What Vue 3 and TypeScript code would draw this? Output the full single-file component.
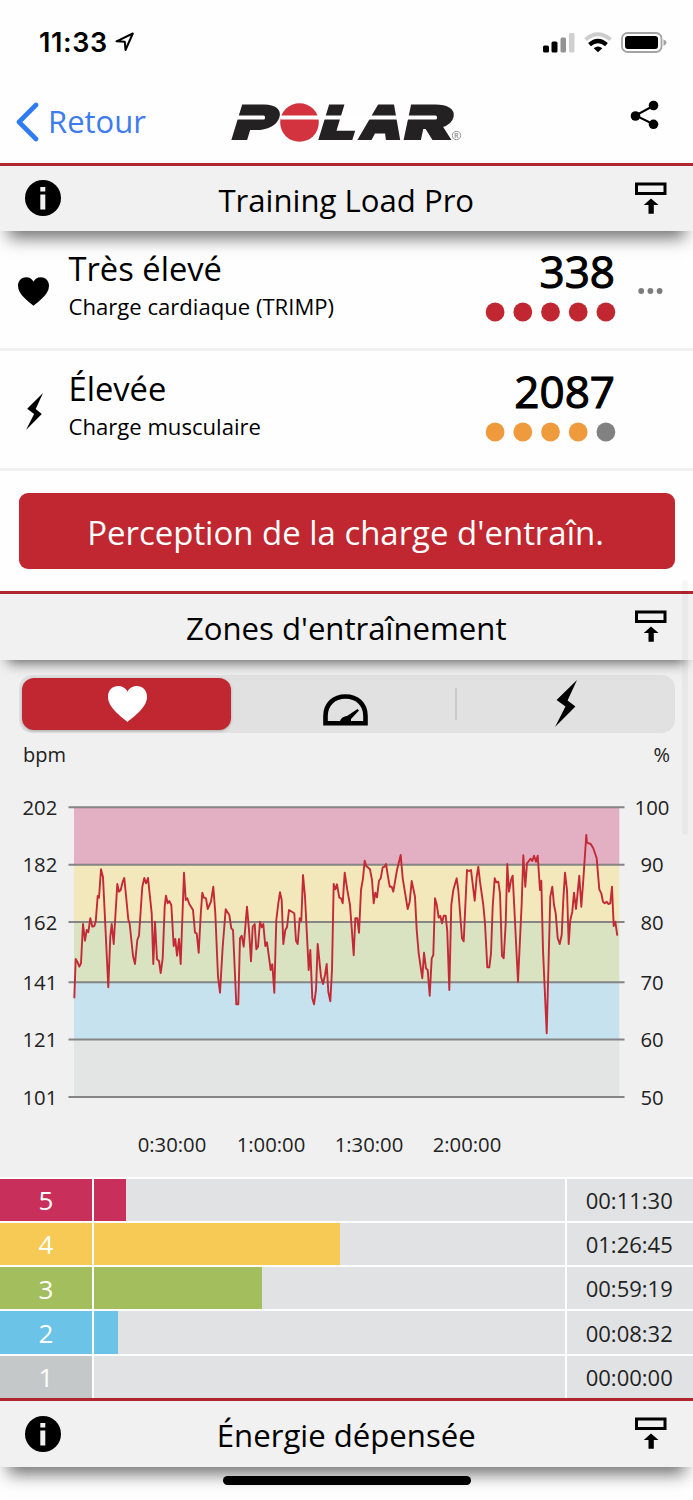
<script setup lang="ts">
interface LoadRow {
  icon: 'heart' | 'bolt'
  level: string
  label: string
  value: string
  dots: string[]
  more: boolean
}

interface Zone {
  id: number
  color: string
  width: number
  time: string
}

const RED = '#c02730'
const ORANGE = '#f09a3e'
const GREY = '#818181'

const HEART = 'M20 37 C15 32 0 23 0 11 C0 4 5 0 10.500 0 C15 0 18.500 2.500 20 6 C21.500 2.500 25 0 29.500 0 C35 0 40 4 40 11 C40 23 25 32 20 37 Z'
const BOLT = 'M21 0 L1.500 19.500 L10 26 L0 46 L19.500 26 L12 20 Z'

const loads: LoadRow[] = [
  { icon: 'heart', level: 'Très élevé', label: 'Charge cardiaque (TRIMP)', value: '338', dots: [RED, RED, RED, RED, RED], more: true },
  { icon: 'bolt', level: 'Élevée', label: 'Charge musculaire', value: '2087', dots: [ORANGE, ORANGE, ORANGE, ORANGE, GREY], more: false },
]

const zones: Zone[] = [
  { id: 5, color: '#c92f5b', width: 32.5, time: '00:11:30' },
  { id: 4, color: '#f6ca55', width: 246.5, time: '01:26:45' },
  { id: 3, color: '#a3be5c', width: 168, time: '00:59:19' },
  { id: 2, color: '#6bc3e8', width: 24.5, time: '00:08:32' },
  { id: 1, color: '#c5c8c9', width: 0, time: '00:00:00' },
]

const levels = [
  { y: 27.3, bpm: '202', pct: '100' },
  { y: 84.7, bpm: '182', pct: '90' },
  { y: 142, bpm: '162', pct: '80' },
  { y: 202.3, bpm: '141', pct: '70' },
  { y: 259.5, bpm: '121', pct: '60' },
  { y: 317, bpm: '101', pct: '50' },
]
const bandColors = ['#e2afc3', '#f3e7bc', '#d9e2c1', '#c5e2ee', '#e3e4e4']
const bands = bandColors.map((fill, i) => ({ fill, y: levels[i].y, h: levels[i + 1].y - levels[i].y }))

const ticks = [
  { x: 172, label: '0:30:00' },
  { x: 271, label: '1:00:00' },
  { x: 369, label: '1:30:00' },
  { x: 467, label: '2:00:00' },
]

// Heart-rate samples, three trace units per chart unit.
const part1 = '43,625 47,507 52,515 58,530 63,520 69,402 75,452 80,420 85,427 91,385 97,410 103,408 107,395 113,318 117,323 123,238 129,262 145,592 151,440 155,402 161,462 172,282 177,305 182,300 188,275 193,264 205,388 209,402 219,498 225,522 232,450 237,437 247,290 253,264 258,280 264,264 275,370 280,522 285,395 291,508 297,513 302,549 308,505 314,350 318,317 323,340 328,333 334,345 341,468 346,447 351,497 357,447 362,522 372,248 377,330 382,325 388,342 399,360 405,428 410,430 416,488 422,375 427,308 432,323 438,325 443,357 453,335 460,290 466,370 474,560 480,608 488,470 497,358 508,375 514,415 519,420 529,643 535,643 540,445 545,437 551,470 561,350 567,420 573,514 578,410 584,402'
const part2 = '49,478 54,470 60,395 65,412 70,402 76,468 81,457 92,540 97,523 103,608 109,390 115,340 120,307 125,330 130,462 136,420 141,412 147,360 163,370 168,452 173,462 179,385 184,392 189,255 195,320 206,540 211,480 217,625 222,643 228,600 233,462 243,560 249,582 255,555 260,522 265,605 271,634 276,540 281,282 286,298 291,283 298,323 303,325 308,340 314,248 322,300 330,345 341,496 346,385 352,385 357,428 363,300 369,265 374,212 379,228 390,238 396,270 401,340 406,308 411,322 417,272 422,265 428,232 434,230 438,222 444,260 449,290 455,290 460,305 471,240 477,215 482,195 488,265 503,357 509,335 515,273 525,320 530,420 536,490 547,565 552,488 558,535 563,540'
const part3 = '-1,617 5,505 10,495 15,325 20,343 26,383 31,378 36,400 41,377 47,377 52,425 58,600 64,345 70,300 80,265 85,300 96,445 101,454 111,240 117,243 123,240 134,332 140,260 145,230 150,275 160,345 165,400 172,532 178,532 183,490 188,350 194,265 199,277 205,275 210,310 216,498 221,505 227,400 232,222 237,305 243,270 248,257 264,575 275,340 280,196 286,290 291,220 302,206 307,213 312,197 318,215 323,197 330,300 334,272 339,480 350,730 361,320 367,290 372,345 377,370 383,445 389,462 395,435 400,330 405,248 411,300 416,462 421,390 427,365 432,308 438,357 448,257 454,350 460,270 469,135 471,158 482,162 490,175 500,205 508,298 514,310 519,335 524,340 530,335 535,342 541,340 546,290 551,408 556,395 562,437'

function toPoints(part: string, offset: number): string {
  return part
    .split(' ')
    .map((pair) => {
      const [x, y] = pair.split(',').map(Number)
      return `${(60 + (x + offset) / 3).toFixed(1)},${(10 + y / 3).toFixed(1)}`
    })
    .join(' ')
}
const trace = [toPoints(part1, 0), toPoints(part2, 540), toPoints(part3, 1110)].join(' ')
</script>

<template>
  <main class="screen">
    <header class="status">
      <div class="clock">
        <span>11:33</span>
        <svg width="20" height="20" viewBox="0 0 20 20">
          <path d="M1.500 9.300 L17.800 1.500 L10.500 18 L9.800 9.800 Z" fill="none" stroke="#000" stroke-width="2" stroke-linejoin="round" />
        </svg>
      </div>
      <svg class="signals" width="126" height="24" viewBox="0 0 126 24">
        <rect x="1" y="13.500" width="6" height="7" rx="1.500" />
        <rect x="9.500" y="9.500" width="6" height="11" rx="1.500" />
        <rect x="18.500" y="5.500" width="5.500" height="15" rx="1.500" fill="#939393" />
        <rect x="27" y="1" width="5.500" height="19.500" rx="1.500" fill="#cfcfcf" />
        <path d="M43.500 7.500 Q56 -3 68.500 7.500" fill="none" stroke="#cdcdcd" stroke-width="3.800" />
        <path d="M47.500 12.600 Q56 5.300 64.500 12.600" fill="none" stroke="#000" stroke-width="4.200" />
        <path d="M51.700 16.300 Q56 12.800 60.300 16.300 L56 20.300 Z" />
        <rect x="80" y="1" width="39.500" height="19" rx="5.500" fill="none" stroke="#a3a3a3" stroke-width="1.800" />
        <rect x="83" y="4" width="33" height="13" rx="3" />
        <path d="M121.500 7.500 Q124.500 8.500 124.500 10.500 Q124.500 12.800 121.500 13.800 Z" fill="#a3a3a3" />
      </svg>
    </header>

    <nav class="nav">
      <a class="back">
        <svg width="26" height="40" viewBox="0 0 26 40">
          <path d="M21 3 L4 20 L21 37" fill="none" stroke="#2f7bf6" stroke-width="4.600" stroke-linecap="round" stroke-linejoin="round" />
        </svg>
        <span>Retour</span>
      </a>
      <svg class="logo" width="260" height="82" viewBox="-12 -20 260 82">
        <g class="wordmark">
          <text transform="translate(-1 37) skewX(-17)" textLength="43" lengthAdjust="spacingAndGlyphs">P</text>
          <text transform="translate(86 37) skewX(-17)" textLength="36" lengthAdjust="spacingAndGlyphs">L</text>
          <text transform="translate(127 37) skewX(-12)" textLength="42" lengthAdjust="spacingAndGlyphs">A</text>
          <text transform="translate(171 37) skewX(-12)" textLength="48" lengthAdjust="spacingAndGlyphs">R</text>
        </g>
        <rect x="16" y="8" width="19" height="14" fill="#242122" />
        <rect x="147" y="12" width="12" height="15" fill="#242122" />
        <rect x="190" y="8" width="18" height="14" fill="#242122" />
        <circle cx="68.500" cy="20.500" r="19.300" fill="#d3333f" />
        <rect x="-2" y="13.400" width="36" height="4" rx="1.500" fill="#fff" />
        <rect x="49" y="13.400" width="157" height="4" rx="1.500" fill="#fff" />
        <circle cx="225.500" cy="33.500" r="4.200" fill="none" stroke="#999" stroke-width="1" />
        <text class="mark" x="225.500" y="36" text-anchor="middle">R</text>
      </svg>
      <svg class="share" width="32" height="32" viewBox="0 0 32 32">
        <path d="M25 6.500 L6.500 16.500 L25 25.500" fill="none" stroke="#000" stroke-width="2" />
        <circle cx="24.500" cy="6.500" r="4.800" />
        <circle cx="6.500" cy="17" r="4.800" />
        <circle cx="24.500" cy="25.300" r="4.800" />
      </svg>
    </nav>

    <section class="bar top-bar">
      <svg class="info" width="36" height="36" viewBox="0 0 36 36">
        <circle cx="18" cy="18" r="18" />
        <rect x="15.300" y="7" width="5" height="4.500" fill="#f1f1f1" />
        <rect x="15.300" y="14.500" width="5" height="15" fill="#f1f1f1" />
      </svg>
      <h2>Training Load Pro</h2>
      <svg class="collapse" width="32" height="33" viewBox="0 0 32 33">
        <rect x="1.500" y="2" width="28.500" height="9.500" fill="none" stroke="#000" stroke-width="3" />
        <path d="M16 16.500 L23.500 23 L18.800 23 L18.800 31.700 L13.500 31.700 L13.500 23 L8.800 23 Z" />
      </svg>
    </section>

    <section class="loads">
      <article v-for="row in loads" :key="row.value" class="load">
        <svg v-if="row.icon === 'heart'" class="load-icon" width="31" height="29" viewBox="0 0 40 37">
          <path :d="HEART" />
        </svg>
        <svg v-else class="load-icon bolt" width="17" height="37" viewBox="0 0 21 46" preserveAspectRatio="none">
          <path :d="BOLT" />
        </svg>
        <div class="load-text">
          <strong>{{ row.level }}</strong>
          <span>{{ row.label }}</span>
        </div>
        <div class="load-score">
          <b>{{ row.value }}</b>
          <svg width="130" height="20" viewBox="0 0 130 20">
            <circle v-for="(color, i) in row.dots" :key="i" :cx="10.1 + i * 27.7" cy="10" r="9.400" :fill="color" />
          </svg>
        </div>
        <svg class="more" width="25" height="6" viewBox="0 0 25 6">
          <template v-if="row.more">
            <circle v-for="i in 3" :key="i" :cx="3.2 + (i - 1) * 9.2" cy="3" r="2.900" fill="#7c7c7c" />
          </template>
        </svg>
      </article>
      <button class="cta">Perception de la charge d'entraîn.</button>
    </section>

    <section class="bar zones-bar">
      <span class="info"></span>
      <h2>Zones d'entraînement</h2>
      <svg class="collapse" width="32" height="33" viewBox="0 0 32 33">
        <rect x="1.500" y="2" width="28.500" height="9.500" fill="none" stroke="#000" stroke-width="3" />
        <path d="M16 16.500 L23.500 23 L18.800 23 L18.800 31.700 L13.500 31.700 L13.500 23 L8.800 23 Z" />
      </svg>
    </section>

    <section class="zones">
      <div class="tabs">
        <div class="tab active">
          <svg width="39" height="36" viewBox="0 0 40 37" preserveAspectRatio="none"><path :d="HEART" fill="#fff" /></svg>
        </div>
        <div class="tab speed">
          <svg width="45" height="32" viewBox="0 0 45 32">
            <path d="M2.500 29.200 V22 C2.500 10 11 2.500 22.500 2.500 C34 2.500 42.500 10 42.500 22 V29.200 Z" fill="none" stroke="#000" stroke-width="4.600" />
            <path d="M17 28 C17 25 20 22.500 24 22 L34.500 15 L36 16.500 L28 25 L28 28 Z" />
          </svg>
        </div>
        <i class="divider"></i>
        <div class="tab power">
          <svg width="22" height="47" viewBox="0 0 21 46" preserveAspectRatio="none"><path :d="BOLT" /></svg>
        </div>
      </div>

      <div class="units"><span>bpm</span><span>%</span></div>

      <svg class="chart" width="693" height="397" viewBox="0 0 693 397">
        <rect v-for="band in bands" :key="band.fill" x="74" :y="band.y" width="545.300" :height="band.h" :fill="band.fill" />
        <g v-for="level in levels" :key="level.bpm">
          <line x1="68.500" x2="624.500" :y1="level.y" :y2="level.y" stroke="#858585" stroke-width="1.900" />
          <text x="22.500" :y="level.y + 7.7">{{ level.bpm }}</text>
          <text x="652" :y="level.y + 7.7" text-anchor="middle">{{ level.pct }}</text>
        </g>
        <text v-for="tick in ticks" :key="tick.label" :x="tick.x" y="371.500" text-anchor="middle">{{ tick.label }}</text>
        <polyline :points="trace" fill="none" stroke="#c32a35" stroke-width="1.900" stroke-linejoin="round" />
      </svg>

      <div class="table">
        <div v-for="zone in zones" :key="zone.id" class="zone">
          <span class="zone-id" :style="{ background: zone.color }">{{ zone.id }}</span>
          <div class="track"><div class="fill" :style="{ width: zone.width + 'px', background: zone.color }"></div></div>
          <span class="zone-time">{{ zone.time }}</span>
        </div>
      </div>
    </section>

    <section class="bar energy">
      <svg class="info" width="36" height="36" viewBox="0 0 36 36">
        <circle cx="18" cy="18" r="18" />
        <rect x="15.300" y="7" width="5" height="4.500" fill="#f1f1f1" />
        <rect x="15.300" y="14.500" width="5" height="15" fill="#f1f1f1" />
      </svg>
      <h2>Énergie dépensée</h2>
      <svg class="collapse" width="32" height="33" viewBox="0 0 32 33">
        <rect x="1.500" y="2" width="28.500" height="9.500" fill="none" stroke="#000" stroke-width="3" />
        <path d="M16 16.500 L23.500 23 L18.800 23 L18.800 31.700 L13.500 31.700 L13.500 23 L8.800 23 Z" />
      </svg>
    </section>
    <footer class="home"><i></i></footer>
    <i class="scrollbar"></i>
  </main>
</template>

<style>
body {
  margin: 0;
  background: #fff;
}
</style>

<style scoped>
* {
  box-sizing: border-box;
}
.screen {
  position: relative;
  width: 693px;
  height: 1500px;
  overflow: hidden;
  background: #fefefe;
  color: #000;
  font-family: "Open Sans", "Noto Sans", sans-serif;
}
svg {
  display: block;
  flex: none;
}
.status {
  display: flex;
  justify-content: space-between;
  align-items: flex-start;
  height: 80px;
  padding: 32px 25px 0 39px;
}
.clock {
  display: flex;
  gap: 7px;
  align-items: center;
  height: 20px;
  font: 600 27px/20px Inter, sans-serif;
  letter-spacing: 0.600px;
}
.clock span {
  padding-top: 2px;
}
.nav {
  display: grid;
  grid-template-columns: 219px 1fr 64px;
  height: 82.500px;
  padding-top: 22px;
}
.back {
  display: flex;
  height: 40px;
  padding-left: 15px;
  gap: 7px;
  align-items: center;
  color: #3d7bee;
  font-size: 31px;
  line-height: 40px;
}
.back span {
  margin-top: -2px;
}
.logo {
  margin: -20px 0 -20px;
}
.wordmark text {
  font: 900 46px Inter, sans-serif;
  fill: #242122;
  stroke: #242122;
  stroke-width: 2px;
}
.mark {
  font: 700 6.500px Inter, sans-serif;
  fill: #999;
}
.share {
  margin-top: -3px;
}
.bar {
  position: relative;
  z-index: 1;
  display: flex;
  align-items: center;
  height: 68.500px;
  padding: 0 26px 0 24.500px;
  border-top: 3.600px solid #b0252e;
  background: #f1f1f1;
  box-shadow: 0 15px 16px -8px rgba(0, 0, 0, 0.56);
}
.zones-bar {
  box-shadow: 0 11px 12px -8px rgba(0, 0, 0, 0.58);
}
.bar .info {
  width: 36px;
}
.bar h2 {
  flex: 1;
  margin: 2px 3px 0 0;
  font-size: 31.150px;
  font-weight: 400;
  line-height: 40px;
  text-align: center;
}
.top-bar h2 {
  margin-top: 4px;
}
.loads {
  height: 360px;
}
.load {
  display: grid;
  grid-template-columns: 68.500px 1fr 130px 78px;
  height: 120px;
  border-bottom: 3px solid #f0f0f0;
}
.load-icon {
  align-self: center;
  margin: 4px 0 0 -1px;
  justify-self: center;
}
.load-icon.bolt {
  margin-left: 1px;
}
.load-text {
  display: flex;
  flex-direction: column;
}
.load-text strong {
  margin-top: 15.500px;
  font-size: 32.700px;
  font-weight: 400;
  line-height: 44px;
}
.load-text span {
  font-size: 22.100px;
  line-height: 30px;
}
.load-score {
  display: flex;
  flex-direction: column;
  align-items: flex-end;
}
.load-score b {
  margin-top: 10px;
  padding-bottom: 1px;
  font-size: 44px;
  font-weight: 400;
  line-height: 60px;
  -webkit-text-stroke: 1.100px #000;
}
.load-score svg {
  overflow: visible;
}
.more {
  align-self: center;
  margin: 2px 0 0 23px;
}
.cta {
  display: block;
  width: 656px;
  height: 76px;
  margin: 22px 0 0 18.500px;
  padding: 4px 2px 0 0;
  border: 0;
  border-radius: 9px;
  background: #c02730;
  color: #fff;
  font: 400 32.950px/44px "Open Sans", "Noto Sans", sans-serif;
}
.zones {
  height: 738.500px;
  padding-top: 15px;
  background: #f0f0f0;
}
.tabs {
  display: flex;
  align-items: center;
  width: 656px;
  height: 58.500px;
  margin-left: 18.500px;
  padding-left: 3.500px;
  border-radius: 13px;
  background: #e1e1e1;
}
.tab {
  display: flex;
  flex: none;
  align-items: center;
  justify-content: center;
  height: 52px;
}
.tab.active {
  width: 209px;
  border-radius: 12px;
  background: #c02730;
  box-shadow: 0 1px 3px rgba(0, 0, 0, 0.25);
}
.tab.active svg {
  margin-left: 1px;
}
.tab.speed {
  width: 224px;
  padding: 12px 0 0 5px;
}
.tab.power {
  width: 219px;
}
.divider {
  flex: none;
  width: 1.500px;
  height: 32px;
  background: #cbcbcb;
}
.units {
  display: flex;
  justify-content: space-between;
  height: 46.500px;
  padding: 7px 23px 0;
  color: #222;
  font-size: 20px;
  line-height: 30px;
}
.chart text {
  fill: #222;
  font-size: 20.300px;
}
.table {
  display: flex;
  flex-direction: column;
  gap: 2px;
  height: 221.500px;
  padding-top: 2px;
  background: #fdfdfd;
}
.zone {
  display: grid;
  grid-template-columns: 91.700px 471px 1fr;
  column-gap: 2px;
  flex: 1;
}
.zone-id {
  display: flex;
  align-items: center;
  justify-content: center;
  color: #fff;
  font-size: 26px;
  line-height: 30px;
  padding-top: 1px;
}
.track {
  background: #e1e2e4;
}
.fill {
  height: 100%;
}
.zone-time {
  display: flex;
  align-items: center;
  padding-left: 19px;
  background: #e1e2e4;
  color: #222;
  font-size: 22px;
  line-height: 30px;
}
.home {
  display: flex;
  position: relative;
  z-index: 2;
  justify-content: center;
  padding-top: 9px;
}
.home i {
  width: 248px;
  height: 9.500px;
  border-radius: 5px;
  background: #000;
}
.scrollbar {
  position: absolute;
  z-index: 3;
  top: 580px;
  left: 681.500px;
  width: 6.500px;
  height: 255px;
  border-radius: 3px;
  background: rgba(0, 0, 0, 0.03);
}
</style>
